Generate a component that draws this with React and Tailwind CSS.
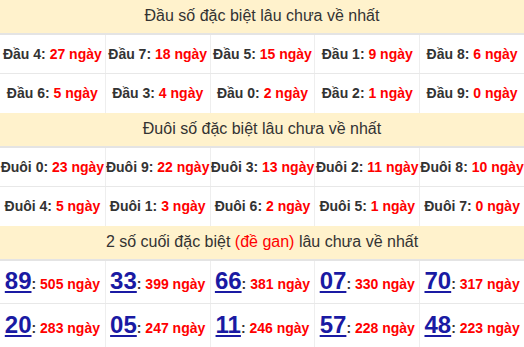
import React from "react";

const dau1 = [["Đầu 4", "27"], ["Đầu 7", "18"], ["Đầu 5", "15"], ["Đầu 1", "9"], ["Đầu 8", "6"]];
const dau2 = [["Đầu 6", "5"], ["Đầu 3", "4"], ["Đầu 0", "2"], ["Đầu 2", "1"], ["Đầu 9", "0"]];
const duoi1 = [["Đuôi 0", "23"], ["Đuôi 9", "22"], ["Đuôi 3", "13"], ["Đuôi 2", "11"], ["Đuôi 8", "10"]];
const duoi2 = [["Đuôi 4", "5"], ["Đuôi 1", "3"], ["Đuôi 6", "2"], ["Đuôi 5", "1"], ["Đuôi 7", "0"]];
const gan1 = [["89", "505"], ["33", "399"], ["66", "381"], ["07", "330"], ["70", "317"]];
const gan2 = [["20", "283"], ["05", "247"], ["11", "246"], ["57", "228"], ["48", "223"]];

function Header({ children }) {
  return (
    <div className="h-[35px] bg-[#fff2cc] border-b-2 border-[#e4e4e4] flex items-center justify-center text-[16px] text-[#333] pb-[1px]">
      {children}
    </div>
  );
}

function TextRow({ items, border }) {
  return (
    <div className={`grid grid-cols-5 h-[39px] ${border ? "border-b border-[#e8e8e8]" : ""}`}>
      {items.map(([label, val], i) => (
        <div
          key={i}
          className={`flex items-center justify-center whitespace-nowrap overflow-hidden font-bold text-[14px] text-[#333] ${i > 0 ? "border-l border-[#eeeeee]" : ""}`}
        >
          <span>
            {label}: <span className="text-[#ff0000]">{val} ngày</span>
          </span>
        </div>
      ))}
    </div>
  );
}

function GanRow({ items, border, h }) {
  return (
    <div className={`grid grid-cols-5 ${h} ${border ? "border-b border-[#e8e8e8]" : ""}`}>
      {items.map(([num, val], i) => (
        <div
          key={i}
          className={`flex items-center justify-center whitespace-nowrap overflow-hidden ${i > 0 ? "border-l border-[#eeeeee]" : ""}`}
        >
          <span className="font-bold text-[#333]">
            <span className="text-[24px] text-[#1a1aa3] underline underline-offset-[2px] leading-none">{num}</span>
            <span className="text-[14px]">: </span>
            <span className="text-[14px] text-[#ff0000]">{val} ngày</span>
          </span>
        </div>
      ))}
    </div>
  );
}

export default function App() {
  return (
    <div className="w-[524px] h-[347px] overflow-hidden bg-white" style={{ fontFamily: '"Liberation Sans", Arial, sans-serif' }}>
      <Header>Đầu số đặc biệt lâu chưa về nhất</Header>
      <TextRow items={dau1} border />
      <TextRow items={dau2} />
      <Header>Đuôi số đặc biệt lâu chưa về nhất</Header>
      <TextRow items={duoi1} border />
      <TextRow items={duoi2} />
      <Header>
        <span>
          2 số cuối đặc biệt <span className="text-[#ff0000]">(đề gan)</span> lâu chưa về nhất
        </span>
      </Header>
      <GanRow items={gan1} border h="h-[43px]" />
      <GanRow items={gan2} h="h-[44px]" />
    </div>
  );
}
